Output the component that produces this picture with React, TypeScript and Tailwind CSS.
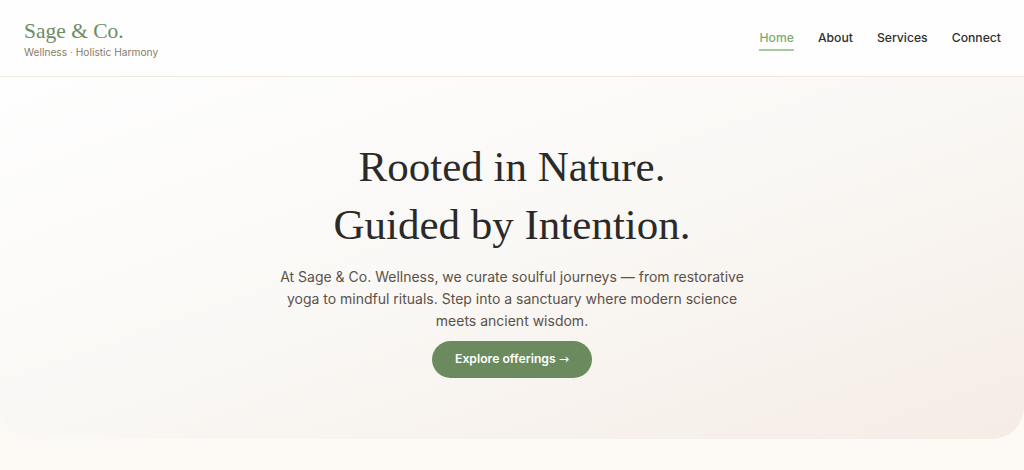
import React from 'react';

const navLinks = ['Home', 'About', 'Services', 'Connect'];

// Top bar with the brand mark and page links
const Header = () => (
  <header className="h-[77px] bg-[#fefefe] border-b border-[#efe9e0] flex items-center justify-between pl-6 pr-[23px]">
    <div className="flex flex-col">
      <span className="font-['Liberation_Serif',serif] text-[21.5px] leading-[26px] text-[#6e8c61]">Sage &amp; Co.</span>
      <span className="text-[10.2px] leading-[13px] mt-[2px] text-[#8a7b69]">Wellness · Holistic Harmony</span>
    </div>
    <nav className="flex items-center gap-6 text-[12.2px] font-medium">
      {navLinks.map((link, i) => (
        <a
          key={link}
          href="#"
          className={
            i === 0
              ? 'text-[#7eab72] border-b-2 border-[#a9c9a0] pb-[2px] mt-[4px]'
              : 'text-[#2f2f2f]'
          }
        >
          {link}
        </a>
      ))}
    </nav>
  </header>
);

export default function App() {
  return (
    <div className="min-h-[470px] bg-[#fdf9f4] font-['Inter',sans-serif]">
      <Header />
      <section className="h-[362px] rounded-b-[32px] bg-gradient-to-br from-[#fefefe] via-[#faf8f5] to-[#f5ece5] flex flex-col items-center pt-[61px]">
        <h1 className="font-['Liberation_Serif',serif] text-[43px] leading-[58px] text-[#2b2a28] text-center">
          Rooted in Nature.
          <br />
          Guided by Intention.
        </h1>
        <p className="mt-[12px] max-w-[480px] text-center text-[14px] leading-[22px] text-[#5b5149]">
          At Sage &amp; Co. Wellness, we curate soulful journeys — from restorative yoga to mindful rituals. Step into a sanctuary where modern science meets ancient wisdom.
        </p>
        <button className="mt-[9px] h-[37px] w-[160px] rounded-full bg-[#6b8b5e] text-white text-[12.2px] font-semibold">
          Explore offerings <span className="font-['DejaVu_Sans',sans-serif] font-normal">→</span>
        </button>
      </section>
    </div>
  );
}
